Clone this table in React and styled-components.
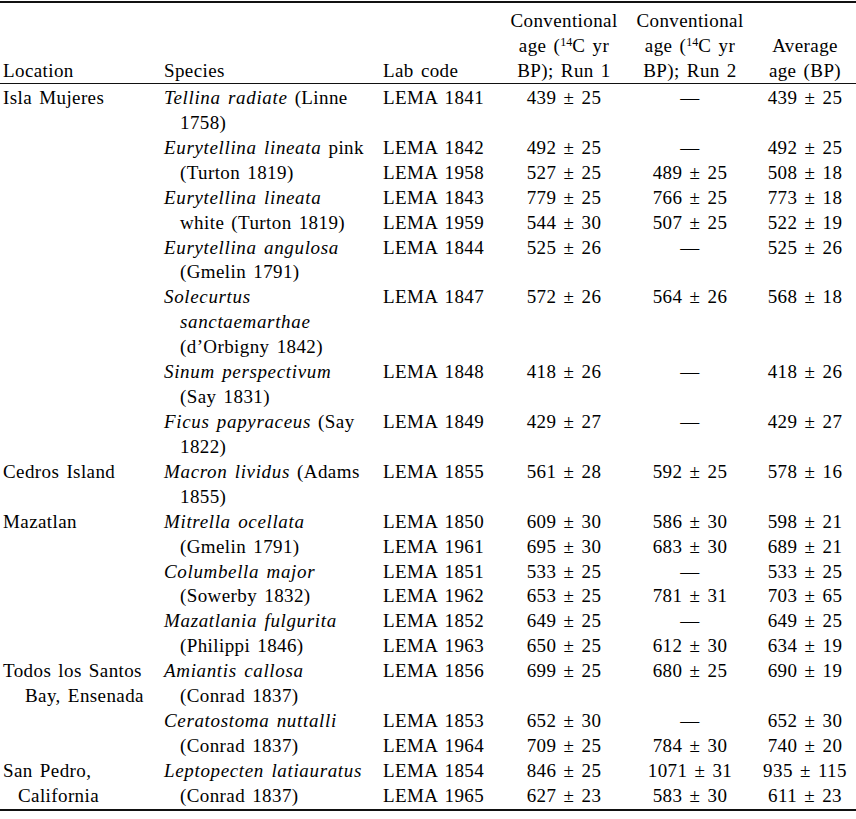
import React from "react"
import styled, { createGlobalStyle } from "styled-components"

const GlobalStyle = createGlobalStyle`
  body {
    margin: 0;
    background: #fff;
  }
`

const COLS = "161px 219px 122px 118px 134px 96px"

const Page = styled.div`
  width: 856px;
  padding-top: 1px;
  font-family: "Liberation Serif", "Times New Roman", serif;
  font-size: 19px;
  letter-spacing: 0.4px;
  word-spacing: 2px;
  color: #000;
`

const Table = styled.div`
  border-top: 2px solid #111;
  border-bottom: 2px solid #111;
`

const Head = styled.div`
  display: grid;
  grid-template-columns: ${COLS};
  align-items: end;
  padding: 5px 0 0 3px;
  border-bottom: 1px solid #111;
  line-height: 25px;
`

const Body = styled.div`
  padding: 2px 0 0 3px;
`

const Line = styled.div`
  display: grid;
  grid-template-columns: ${COLS};
  height: 24.93px;
  line-height: 24.93px;
  white-space: nowrap;
`

const Cell = styled.div`
  text-align: ${({ $center }) => ($center ? "center" : "left")};
  padding-left: ${({ $indent }) => $indent || 0}px;
`

const Sup = styled.sup`
  font-size: 12px;
  line-height: 0;
  vertical-align: 6px;
  letter-spacing: 0;
`

const Latin = styled.i`
  letter-spacing: 0.65px;
`

const lines = [
  ["Isla Mujeres", 0, ["Tellina radiate", " (Linne"], 0, "LEMA 1841", "439 ± 25", "—", "439 ± 25"],
  ["", 0, ["", "1758)"], 16],
  ["", 0, ["Eurytellina lineata", " pink"], 0, "LEMA 1842", "492 ± 25", "—", "492 ± 25"],
  ["", 0, ["", "(Turton 1819)"], 16, "LEMA 1958", "527 ± 25", "489 ± 25", "508 ± 18"],
  ["", 0, ["Eurytellina lineata", ""], 0, "LEMA 1843", "779 ± 25", "766 ± 25", "773 ± 18"],
  ["", 0, ["", "white (Turton 1819)"], 16, "LEMA 1959", "544 ± 30", "507 ± 25", "522 ± 19"],
  ["", 0, ["Eurytellina angulosa", ""], 0, "LEMA 1844", "525 ± 26", "—", "525 ± 26"],
  ["", 0, ["", "(Gmelin 1791)"], 16],
  ["", 0, ["Solecurtus", ""], 0, "LEMA 1847", "572 ± 26", "564 ± 26", "568 ± 18"],
  ["", 0, ["sanctaemarthae", ""], 16],
  ["", 0, ["", "(d\u2019Orbigny 1842)"], 16],
  ["", 0, ["Sinum perspectivum", ""], 0, "LEMA 1848", "418 ± 26", "—", "418 ± 26"],
  ["", 0, ["", "(Say 1831)"], 16],
  ["", 0, ["Ficus papyraceus", " (Say"], 0, "LEMA 1849", "429 ± 27", "—", "429 ± 27"],
  ["", 0, ["", "1822)"], 16],
  ["Cedros Island", 0, ["Macron lividus", " (Adams"], 0, "LEMA 1855", "561 ± 28", "592 ± 25", "578 ± 16"],
  ["", 0, ["", "1855)"], 16],
  ["Mazatlan", 0, ["Mitrella ocellata", ""], 0, "LEMA 1850", "609 ± 30", "586 ± 30", "598 ± 21"],
  ["", 0, ["", "(Gmelin 1791)"], 16, "LEMA 1961", "695 ± 30", "683 ± 30", "689 ± 21"],
  ["", 0, ["Columbella major", ""], 0, "LEMA 1851", "533 ± 25", "—", "533 ± 25"],
  ["", 0, ["", "(Sowerby 1832)"], 16, "LEMA 1962", "653 ± 25", "781 ± 31", "703 ± 65"],
  ["", 0, ["Mazatlania fulgurita", ""], 0, "LEMA 1852", "649 ± 25", "—", "649 ± 25"],
  ["", 0, ["", "(Philippi 1846)"], 16, "LEMA 1963", "650 ± 25", "612 ± 30", "634 ± 19"],
  ["Todos los Santos", 0, ["Amiantis callosa", ""], 0, "LEMA 1856", "699 ± 25", "680 ± 25", "690 ± 19"],
  ["Bay, Ensenada", 22, ["", "(Conrad 1837)"], 16],
  ["", 0, ["Ceratostoma nuttalli", ""], 0, "LEMA 1853", "652 ± 30", "—", "652 ± 30"],
  ["", 0, ["", "(Conrad 1837)"], 16, "LEMA 1964", "709 ± 25", "784 ± 30", "740 ± 20"],
  ["San Pedro,", 0, ["Leptopecten latiauratus", ""], 0, "LEMA 1854", "846 ± 25", "1071 ± 31", "935 ± 115"],
  ["California", 15, ["", "(Conrad 1837)"], 16, "LEMA 1965", "627 ± 23", "583 ± 30", "611 ± 23"],
]

const App = () => {
  return (
    <Page>
      <GlobalStyle />
      <Table>
        <Head>
          <Cell>Location</Cell>
          <Cell>Species</Cell>
          <Cell>Lab code</Cell>
          <Cell $center>
            Conventional
            <br />
            age (<Sup>14</Sup>C yr
            <br />
            BP); Run 1
          </Cell>
          <Cell $center>
            Conventional
            <br />
            age (<Sup>14</Sup>C yr
            <br />
            BP); Run 2
          </Cell>
          <Cell $center>
            Average
            <br />
            age (BP)
          </Cell>
        </Head>
        <Body>
          {lines.map(([loc, locIndent, [latin, rest], spIndent, lab, r1, r2, avg], i) => (
            <Line key={i}>
              <Cell $indent={locIndent}>{loc}</Cell>
              <Cell $indent={spIndent}>
                {latin && <Latin>{latin}</Latin>}
                {rest}
              </Cell>
              <Cell>{lab}</Cell>
              <Cell $center>{r1}</Cell>
              <Cell $center>{r2}</Cell>
              <Cell $center>{avg}</Cell>
            </Line>
          ))}
        </Body>
      </Table>
    </Page>
  )
}

export default App
